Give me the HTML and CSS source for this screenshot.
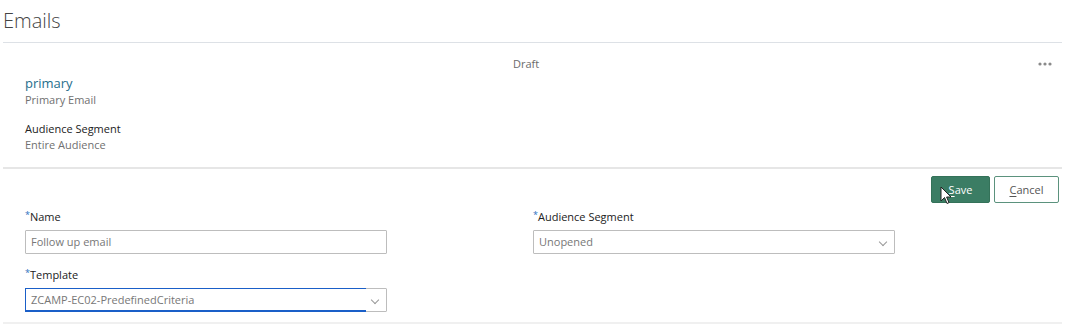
FILE: index.html
```html
<!DOCTYPE html>
<html lang="en">
<head>
    <meta charset="UTF-8">
    <title>Emails</title>
    <link rel="stylesheet" href="styles.css">
</head>
<body>

<header class="page-head">
    <h1>Emails</h1>
</header>

<section class="email-card">
    <div class="card-top">
        <div class="card-info">
            <a href="#" class="email-name">primary</a>
            <div class="muted">Primary Email</div>
            <div class="seg-label">Audience Segment</div>
            <div class="muted">Entire Audience</div>
        </div>
        <div class="status">Draft</div>
        <svg class="more" width="14" height="4" viewBox="0 0 14 4">
            <circle cx="2" cy="2" r="1.6" fill="#8a8a8a"/>
            <circle cx="7" cy="2" r="1.6" fill="#8a8a8a"/>
            <circle cx="12" cy="2" r="1.6" fill="#8a8a8a"/>
        </svg>
    </div>
</section>

<section class="edit-form">
    <div class="actions">
        <button class="btn btn-save"><u>S</u>ave</button>
        <button class="btn btn-cancel"><u>C</u>ancel</button>
        <svg class="cursor" width="14" height="20" viewBox="0 0 14 20">
            <path d="M1 1 L1 15 L4.5 11.5 L7 17.5 L9 16.6 L6.6 11 L11 11 Z" fill="#fff" stroke="#222" stroke-width="1"/>
        </svg>
    </div>
    <div class="fields">
        <div class="col">
            <label class="field-label"><span class="req">*</span>Name</label>
            <div class="input">Follow up email</div>
            <label class="field-label"><span class="req">*</span>Template</label>
            <div class="input select focused">ZCAMP-EC02-PredefinedCriteria<span class="chev"></span></div>
        </div>
        <div class="col">
            <label class="field-label"><span class="req">*</span>Audience Segment</label>
            <div class="input select">Unopened<span class="chev"></span></div>
        </div>
    </div>
</section>

</body>
</html>
```

FILE: styles.css
```css
body { font-family: "Open Sans", "Noto Sans", sans-serif; background-color: #fff; margin: 0; padding: 0; color: #333; }
.page-head { padding: 0 5px 0 3px; }
.page-head h1 { margin: 0; padding: 8px 0 8px; font-size: 20px; font-weight: 300; color: #444; border-bottom: 1px solid #dde1e6; line-height: 26px; }
.email-card { margin: 0 5px 0 3px; border-bottom: 2px solid #e6e6e6; }
.card-top { display: flex; align-items: flex-start; padding: 13px 10px 14px 22px; }
.card-info { width: 488px; padding-top: 19px; font-size: 11px; line-height: 16px; }
.email-name { display: block; color: #1f6e8c; text-decoration: none; font-size: 13px; line-height: 17px; }
.muted { color: #707070; }
.seg-label { color: #222; margin-top: 13px; }
.status { flex: 1; font-size: 11px; color: #6b6b6b; line-height: 15px; }
.more { margin-top: 6px; margin-right: 0; }
.edit-form { margin: 0 5px 0 3px; padding-bottom: 10px; border-bottom: 2px solid #f0f0f0; }
.actions { display: flex; justify-content: flex-end; gap: 4px; padding-top: 7px; padding-right: 3px; position: relative; }
.btn { font-family: inherit; font-size: 11px; height: 27px; border-radius: 2px; cursor: pointer; padding: 0; }
.btn u { text-decoration: underline; text-underline-offset: 2px; }
.btn-save { width: 59px; background-color: #3b7d64; color: #fff; border: 1px solid #347259; }
.btn-cancel { width: 65px; background-color: #fff; color: #555; border: 1px solid #5b927d; }
.cursor { position: absolute; left: 937px; top: 17px; }
.fields { display: flex; gap: 146px; padding-left: 22px; }
.col { width: 362px; }
.field-label { display: block; font-size: 11px; color: #222; line-height: 15px; margin-top: 4px; margin-bottom: 6px; }
.col .input + .field-label { margin-top: 11px; }
.req { color: #2d6fc0; font-size: 9px; vertical-align: 3px; }
.input { box-sizing: border-box; height: 24px; border: 1px solid #bdbdbd; border-radius: 1px; font-size: 11px; color: #777; line-height: 22px; padding-left: 5px; position: relative; }
.select { padding-right: 24px; }
.chev { position: absolute; right: 8px; top: 8px; width: 5px; height: 5px; border-right: 1px solid #999; border-bottom: 1px solid #999; transform: rotate(45deg); }
.focused::before { content: ""; position: absolute; left: -1px; top: -1px; bottom: -1px; width: 340px; border: 2px solid #1a5fc8; border-right: none; border-top-width: 1px; border-left-width: 1px; }
```
